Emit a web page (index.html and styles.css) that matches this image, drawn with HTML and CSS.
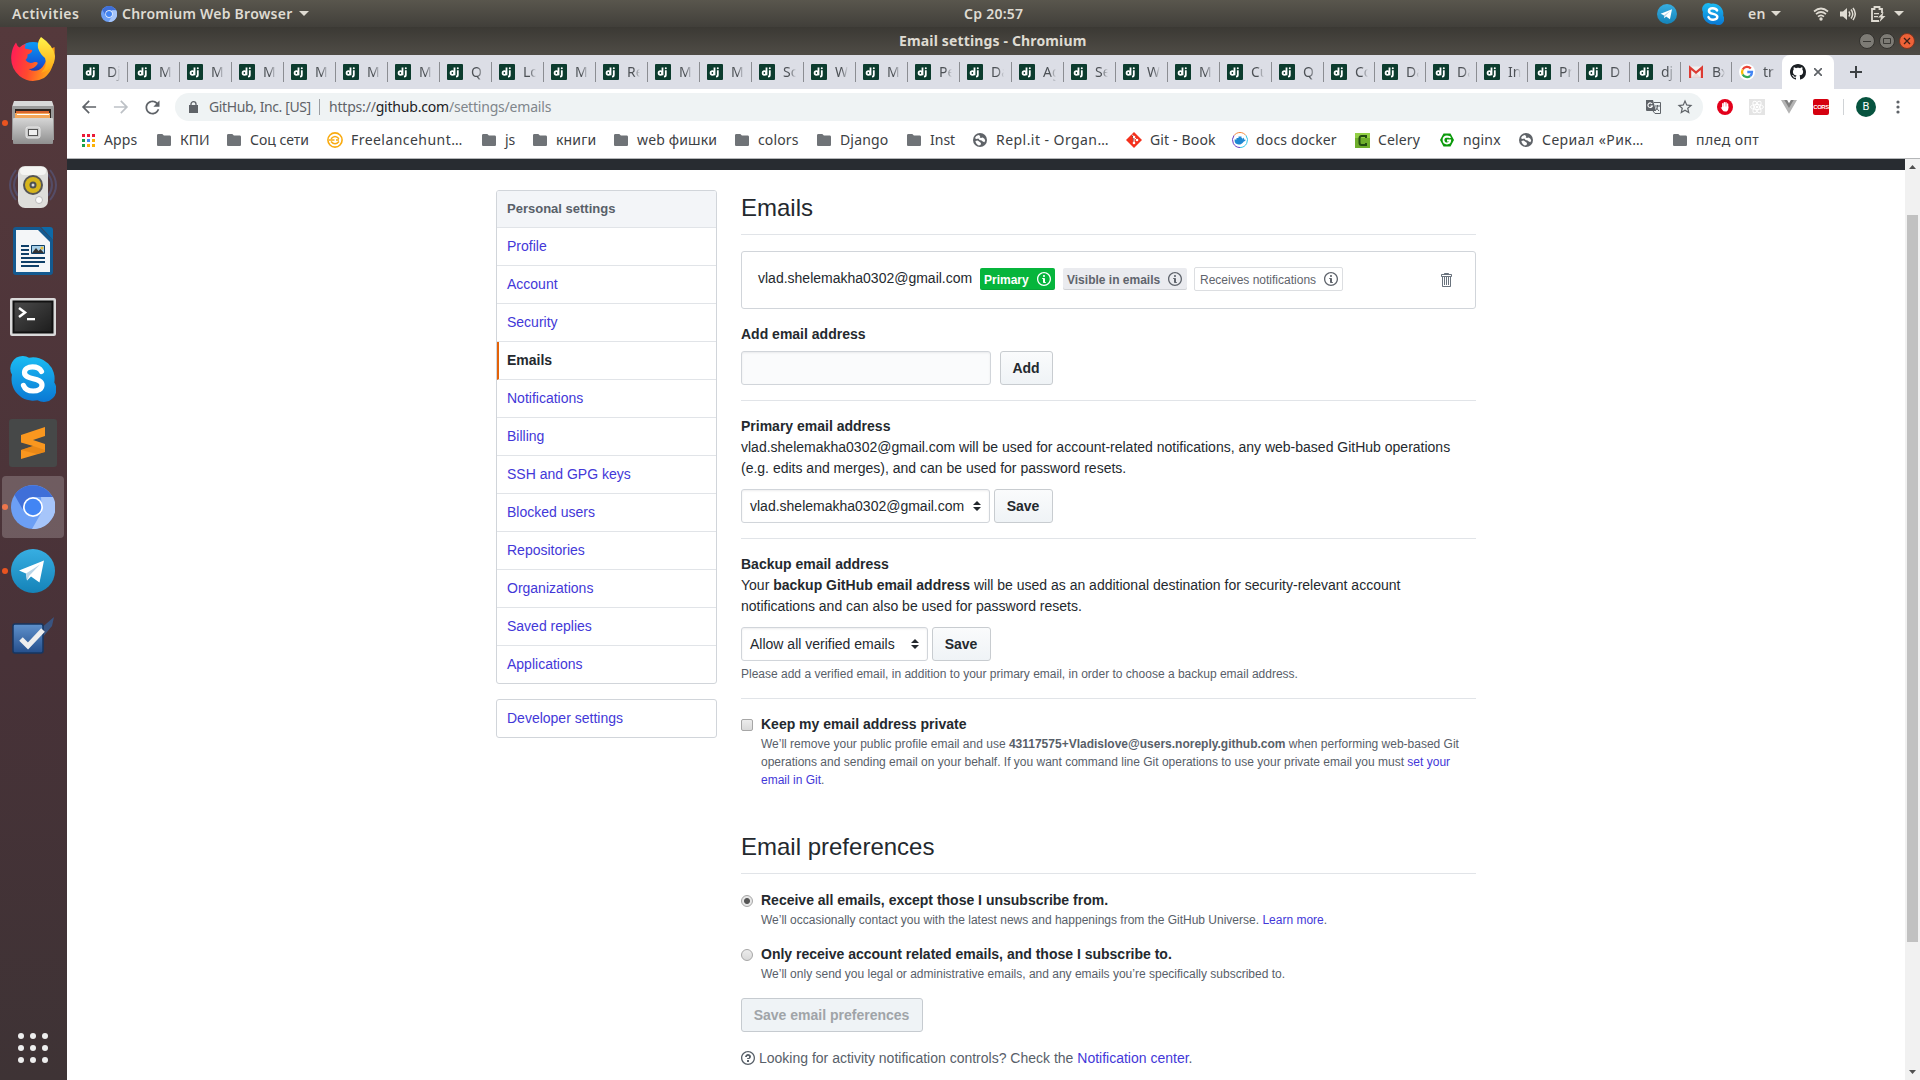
FILE: index.html
```html
<!DOCTYPE html>
<html lang="en">
<head>
<meta charset="utf-8">
<title>Email settings</title>
<link rel="stylesheet" href="styles.css">
</head>
<body>
<svg class="defs" width="0" height="0">
  <defs>
    <linearGradient id="ff-body" x1="0" y1="0.3" x2="1" y2="0.5"><stop offset="0" stop-color="#ff1d57"/><stop offset="0.45" stop-color="#ff4a2e"/><stop offset="1" stop-color="#ffb412"/></linearGradient>
    <linearGradient id="ff-tail" x1="0" y1="0" x2="0" y2="1"><stop offset="0" stop-color="#fff44a"/><stop offset="1" stop-color="#ffa414"/></linearGradient>
    <linearGradient id="ff-globe" x1="0" y1="0" x2="0" y2="1"><stop offset="0" stop-color="#0a9cf5"/><stop offset="0.6" stop-color="#1258d8"/><stop offset="1" stop-color="#2d1a7a"/></linearGradient>
    <linearGradient id="steel" x1="0" y1="0" x2="0" y2="1"><stop offset="0" stop-color="#d6d6d6"/><stop offset="1" stop-color="#8f8f8f"/></linearGradient>
    <linearGradient id="skype-g" x1="0" y1="0" x2="0" y2="1"><stop offset="0" stop-color="#1bbcf3"/><stop offset="1" stop-color="#0a78d4"/></linearGradient>
    <linearGradient id="tg-g" x1="0" y1="0" x2="0" y2="1"><stop offset="0" stop-color="#37aee2"/><stop offset="1" stop-color="#1583b8"/></linearGradient>
    <linearGradient id="todo-g" x1="0" y1="0" x2="0" y2="1"><stop offset="0" stop-color="#5f91cc"/><stop offset="1" stop-color="#254f8c"/></linearGradient>
    <linearGradient id="term-g" x1="0" y1="0" x2="1" y2="1"><stop offset="0" stop-color="#4b4b4b"/><stop offset="1" stop-color="#1c1c1c"/></linearGradient>
  </defs>
  <symbol id="dj" viewBox="0 0 16 16"><rect width="16" height="16" rx="1" fill="#0c3c2e"/><g fill="none" stroke="#fff" stroke-width="1.800"><path d="M7.500 3.500v7.800"/><circle cx="5.400" cy="9" r="1.800"/><path d="M10.800 6.200v4.900q0 1.600-1.800 1.600"/></g><circle cx="10.800" cy="4.300" r="1" fill="#fff"/></symbol>
  <symbol id="folder" viewBox="0 0 14 12"><path fill="#6f7377" d="M1.300 0h4l1.600 1.600h5.800c.7 0 1.300.6 1.300 1.300v7.800c0 .7-.6 1.300-1.300 1.300H1.300C.6 12 0 11.400 0 10.700V1.300C0 .6.6 0 1.300 0z"/></symbol>
  <symbol id="globe" viewBox="0 0 14 14"><circle cx="7" cy="7" r="7" fill="#5f6368"/><path fill="#fff" d="M2 5.200C2.600 3.500 4 2.300 5.500 2l1.800 1-.6 1.300 1.200.7 1.800-.5 1.700 1.200.8 1.700-.8 1.800-1.600-.6L8.600 7.500l-2-.6-1.300-1.500L3.600 6zM2.400 8l2.200-.4 1.800 1.100 1.600 1.200-.4 2.200-1.800.4C4 11.900 2.700 10 2.400 8z"/></symbol>
  <symbol id="chromium" viewBox="0 0 44 44"><circle cx="22" cy="22" r="22" fill="#6c9ff5"/><path fill="#3f6fd8" d="M3.500 10A22 22 0 0 1 40.500 10.600L42 12H22L11.500 24z"/><path fill="#a6c5fa" d="M42 12A22 22 0 0 1 21 44L31 26.500 30 12z"/><circle cx="22" cy="22" r="10" fill="#fff"/><circle cx="22" cy="22" r="8.300" fill="#4285f4"/></symbol>
  <symbol id="skype" viewBox="0 0 46 46"><path fill="url(#skype-g)" d="M13 0a12 12 0 0 1 6 1.700A21.500 21.500 0 0 1 44.300 26.500 12.500 12.500 0 0 1 27.500 44.200 21.500 21.500 0 0 1 2 18.700 12.500 12.500 0 0 1 13 0z"/><path fill="none" stroke="#fff" stroke-width="5.200" stroke-linecap="round" d="M31.500 15.500c-2-3.800-6-4.600-9-4.600-4.500 0-8 2-8 5.600 0 8.500 17.500 4 17.500 12.500 0 4-4 6-8.800 6-4.500 0-8.200-1.800-9.700-5.500"/></symbol>
  <symbol id="telegram" viewBox="0 0 44 44"><circle cx="22" cy="22" r="22" fill="url(#tg-g)"/><path fill="#fff" d="M8 21.500 33 11.500 28.500 33.500 20 27.500 16 31.500 15 24.500z"/><path fill="#b9d4e6" d="M15 24.500 29 15.500 18.500 26.500 16 31.500z"/></symbol>
  <symbol id="info" viewBox="0 0 14 16"><path d="M6.300 5.690a.942.942 0 0 1-.28-.7c0-.28.09-.52.28-.7.19-.18.42-.28.7-.28.28 0 .52.09.7.28.18.19.28.42.28.7 0 .28-.09.52-.28.7a1 1 0 0 1-.7.3c-.28 0-.52-.11-.7-.3zM8 7.990c-.02-.25-.11-.48-.31-.69-.2-.19-.42-.3-.69-.31H6c-.27.02-.48.13-.69.31-.2.2-.3.44-.31.69h1v3c.02.27.11.5.31.69.2.2.42.31.69.31h1c.27 0 .48-.11.69-.31.2-.19.3-.42.31-.69H8V7.980v.01zM7 2.300c-3.140 0-5.700 2.540-5.700 5.680 0 3.140 2.560 5.700 5.700 5.700s5.700-2.550 5.700-5.700c0-3.150-2.560-5.690-5.700-5.690v.01zM7 .98c3.860 0 7 3.140 7 7s-3.140 7-7 7-7-3.120-7-7 3.140-7 7-7z"/></symbol>
  <symbol id="updown" viewBox="0 0 8 10"><path fill="#24292e" d="M4 0l4 4H0zM4 10L0 6h8z"/></symbol>
</svg>

<header class="topbar">
  <span class="activities">Activities</span>
  <svg class="app-icon" width="16" height="16"><use href="#chromium"/></svg>
  <span class="app-name">Chromium Web Browser</span>
  <i class="caret"></i>
  <span class="clock">Ср 20:57</span>
  <div class="tray">
    <svg class="tray-tg" width="20" height="20"><use href="#telegram"/></svg>
    <svg class="tray-skype" width="22" height="22"><use href="#skype"/></svg>
    <span class="lang">en</span>
    <i class="caret"></i>
    <svg class="tray-wifi" width="16" height="14" viewBox="0 0 16 14"><g fill="none" stroke="#dfdbd2" stroke-width="1.700"><path d="M1 4.500Q8-1.500 15 4.500"/><path d="M3 7.200Q8 2.800 13 7.200"/><path d="M5 9.700Q8 7 11 9.700"/></g><circle cx="8" cy="12" r="1.700" fill="#dfdbd2"/></svg>
    <svg class="tray-vol" width="16" height="14" viewBox="0 0 16 14"><path fill="#dfdbd2" d="M0 4.500h3L7 1v12L3 9.500H0z"/><g fill="none" stroke="#dfdbd2" stroke-width="1.500"><path d="M8.800 4.500q2 2.500 0 5M11 2.500q3.500 4.500 0 9M13 1q4.500 6 0 12"/></g></svg>
    <svg class="tray-bat" width="15" height="16" viewBox="0 0 15 16"><path fill="none" stroke="#dfdbd2" stroke-width="1.800" d="M8 15H1V3h2.500V1h5v2H11v4"/><path fill="#dfdbd2" d="M3 7h5v1.300H3zM3 10h4v1.300H3zM12.500 6 7 11.500h3L8.500 16l6-6h-3z"/></svg>
    <i class="caret"></i>
  </div>
</header>

<div class="desktop">
<nav class="dock">
  <div class="launcher"><svg width="44" height="46" viewBox="0 0 44 46"><circle cx="22" cy="24" r="18" fill="url(#ff-globe)"/><path fill="url(#ff-body)" d="M5 6.500Q6 10 8.500 11.500 11 8.500 15 8q-1.500 2.500-1 4.500l7 1.500q1 2.500-4.500 4.500.5 4-2 5.500 3 4.500 9 2 4-.5 3 2-3 5-9 5 8 4.500 14-2 6-8 4-16l8-4Q45 33 33 42 20 49 8.500 40-1.500 31 .5 18 1.500 11 5 6.500z"/><path fill="url(#ff-tail)" d="M30 1Q26 6 27 12 29 18 34 22 37 30 30 37 44 33 44 20 42 9 30 1z"/></svg></div>
  <div class="launcher running"><svg width="44" height="46" viewBox="0 0 44 46"><path fill="#d9d9d9" d="M3 1h38l2 6v10H1V7z"/><path fill="#9b9b9b" d="M1 6h42v34H1z"/><path fill="#2c2521" d="M4 9h36v11H4z"/><path fill="#d9662e" d="M5 11h33v5H5z"/><path fill="#f3a75a" d="M4 13h35v5H4z"/><path fill="#fff" d="M6 14h32v1H6z"/><rect x="2" y="18" width="40" height="26" rx="1" fill="url(#steel)"/><rect x="15" y="27" width="14" height="11" rx="2" fill="#c9c9c9" stroke="#e9e9e9"/><rect x="17.500" y="29.500" width="9" height="6" fill="#efefef" stroke="#555"/></svg></div>
  <div class="launcher"><svg width="50" height="44" viewBox="0 0 50 44"><g fill="none" stroke="#56567a" stroke-width="2" opacity=".7"><path d="M8 5Q-4 20 8 35M42 5q12 15 0 30"/><path d="M10 9Q2 20 10 31M40 9q8 11 0 22"/></g><rect x="10" y="1" width="30" height="42" rx="7" fill="#dededb"/><rect x="12" y="2" width="26" height="8" rx="4" fill="#f5f5f3"/><circle cx="25" cy="20" r="10" fill="#555"/><circle cx="25" cy="20" r="8" fill="#d6b51c"/><circle cx="25" cy="20" r="3.500" fill="#4c5152"/><circle cx="25" cy="20" r="1.500" fill="#ddd"/><circle cx="31" cy="35" r="3.500" fill="#fafafa" stroke="#bbb"/></svg></div>
  <div class="launcher"><svg width="40" height="48" viewBox="0 0 40 48"><path fill="#145a90" d="M3 0h24l13 13v32q0 3-3 3H3q-3 0-3-3V3q0-3 3-3z"/><path fill="#f4f6f8" d="M3 3h22l12 12v30H3z"/><path fill="#0d6aa8" d="M28 0h9q3 0 3 3v10z"/><path stroke="#0e3f68" stroke-width="2" d="M8 19h8M8 23h8M8 27h8M8 31h24M8 35h24M8 39h18"/><path fill="#a8d0e8" stroke="#0e3f68" d="M18.500 18.500h13v8h-13z"/><path fill="#333" d="m19 26 4-5 2.500 3 2-2 3.500 4z"/><circle cx="29" cy="21" r="1.500" fill="#e9bd32"/></svg></div>
  <div class="launcher terminal"><svg width="46" height="40" viewBox="0 0 46 40"><rect y="1" width="46" height="38" rx="2" fill="#dadada"/><rect x="3.500" y="4.500" width="39" height="31" fill="url(#term-g)" stroke="#111" stroke-width="2"/><path fill="none" stroke="#fff" stroke-width="2.500" d="m9 11 6 4.500L9 20"/><path fill="#fff" d="M17 21h8v2.300h-8z"/></svg></div>
  <div class="launcher"><svg width="46" height="46"><use href="#skype"/></svg></div>
  <div class="launcher"><svg width="48" height="48" viewBox="0 0 48 48"><rect width="48" height="48" rx="3" fill="#464848"/><path fill="#f9971f" d="m12 16 24-8v9l-12 4 12 4v8l-24 7v-9l12-4-12-3.500z"/><path fill="#d9790f" d="m12 31 12-4 12 4v2l-8 2z" opacity=".5"/></svg></div>
  <div class="launcher running focused"><svg width="44" height="44"><use href="#chromium"/></svg></div>
  <div class="launcher running"><svg width="44" height="44"><use href="#telegram"/></svg></div>
  <div class="launcher"><svg width="44" height="42" viewBox="0 0 44 42"><path fill="#365c93" d="m28 16 15-13-2 9-10 12z" opacity=".8"/><rect x="2" y="10" width="30" height="29" rx="2" fill="url(#todo-g)" stroke="#163661" stroke-width="1.500"/><path fill="none" stroke="#eee" stroke-width="5" d="m10 25 7 7 15-16"/></svg></div>
  <div class="show-apps"><i></i><i></i><i></i><i></i><i></i><i></i><i></i><i></i><i></i></div>
</nav>

<section class="window">
  <div class="titlebar">
    <span class="win-title">Email settings - Chromium</span>
    <div class="win-buttons">
      <svg width="16" height="16" viewBox="0 0 16 16"><circle cx="8" cy="8" r="7.500" fill="#7d7b75" stroke="#33322e"/><path stroke="#3a3935" d="M4 8.500h8"/></svg>
      <svg width="16" height="16" viewBox="0 0 16 16"><circle cx="8" cy="8" r="7.500" fill="#7d7b75" stroke="#33322e"/><path fill="none" stroke="#3a3935" d="M4.500 5.500h7v5h-7z"/></svg>
      <svg width="16" height="16" viewBox="0 0 16 16"><circle cx="8" cy="8" r="7.500" fill="#ee6238" stroke="#7e3520"/><path fill="none" stroke="#3c2018" stroke-width="1.300" d="m5 5 6 6m0-6-6 6"/></svg>
    </div>
  </div>

  <div class="tabs">
    <div class="tab"><svg><use href="#dj"/></svg><span>Dj</span></div>
    <div class="tab"><svg><use href="#dj"/></svg><span>M</span></div>
    <div class="tab"><svg><use href="#dj"/></svg><span>M</span></div>
    <div class="tab"><svg><use href="#dj"/></svg><span>M</span></div>
    <div class="tab"><svg><use href="#dj"/></svg><span>M</span></div>
    <div class="tab"><svg><use href="#dj"/></svg><span>M</span></div>
    <div class="tab"><svg><use href="#dj"/></svg><span>M</span></div>
    <div class="tab"><svg><use href="#dj"/></svg><span>Q</span></div>
    <div class="tab"><svg><use href="#dj"/></svg><span>Lo</span></div>
    <div class="tab"><svg><use href="#dj"/></svg><span>M</span></div>
    <div class="tab"><svg><use href="#dj"/></svg><span>Re</span></div>
    <div class="tab"><svg><use href="#dj"/></svg><span>M</span></div>
    <div class="tab"><svg><use href="#dj"/></svg><span>M</span></div>
    <div class="tab"><svg><use href="#dj"/></svg><span>Sc</span></div>
    <div class="tab"><svg><use href="#dj"/></svg><span>W</span></div>
    <div class="tab"><svg><use href="#dj"/></svg><span>M</span></div>
    <div class="tab"><svg><use href="#dj"/></svg><span>Pe</span></div>
    <div class="tab"><svg><use href="#dj"/></svg><span>Da</span></div>
    <div class="tab"><svg><use href="#dj"/></svg><span>Ag</span></div>
    <div class="tab"><svg><use href="#dj"/></svg><span>Se</span></div>
    <div class="tab"><svg><use href="#dj"/></svg><span>W</span></div>
    <div class="tab"><svg><use href="#dj"/></svg><span>M</span></div>
    <div class="tab"><svg><use href="#dj"/></svg><span>Cu</span></div>
    <div class="tab"><svg><use href="#dj"/></svg><span>Q</span></div>
    <div class="tab slim"><svg><use href="#dj"/></svg><span>Co</span></div>
    <div class="tab slim"><svg><use href="#dj"/></svg><span>Da</span></div>
    <div class="tab slim"><svg><use href="#dj"/></svg><span>Da</span></div>
    <div class="tab slim"><svg><use href="#dj"/></svg><span>In</span></div>
    <div class="tab slim"><svg><use href="#dj"/></svg><span>Pr</span></div>
    <div class="tab slim"><svg><use href="#dj"/></svg><span>D</span></div>
    <div class="tab slim"><svg><use href="#dj"/></svg><span>dj</span></div>
    <div class="tab slim"><svg viewBox="0 0 16 16"><path fill="#f1f1f1" d="M1 2.500h14v11H1z"/><path fill="#d9a9a5" d="M3 14 8 8.500l5 5.500z" opacity=".3"/><path fill="none" stroke="#dd3b33" stroke-width="2.200" d="M2.100 14V3.600L8 8.600l5.900-5V14"/></svg><span>Вх</span></div>
    <div class="tab slim last"><svg viewBox="0 0 16 16"><circle cx="8" cy="8" r="8" fill="#fff"/><g fill="none" stroke-width="2.300"><path stroke="#ea4335" d="M11.800 4.600A5 5 0 0 0 3.700 5.500"/><path stroke="#fbbc05" d="M3.700 5.500a5 5 0 0 0 0 5"/><path stroke="#34a853" d="M3.700 10.500a5 5 0 0 0 7.500 1.500"/><path stroke="#4285f4" d="M11.200 12A5 5 0 0 0 13 8H8.300"/></g></svg><span>tr</span></div>
    <div class="tab-active">
      <svg width="16" height="16" viewBox="0 0 16 16"><path fill="#1b1f23" d="M8 0C3.580 0 0 3.580 0 8c0 3.540 2.290 6.530 5.470 7.590.4.07.55-.17.55-.38 0-.19-.01-.82-.01-1.490-2.010.37-2.530-.49-2.690-.94-.09-.23-.48-.94-.82-1.130-.28-.15-.68-.52-.01-.53.63-.01 1.080.58 1.230.82.72 1.210 1.870.87 2.330.66.07-.52.28-.87.51-1.070-1.780-.2-3.640-.89-3.640-3.950 0-.87.31-1.590.82-2.150-.08-.2-.36-1.020.08-2.120 0 0 .67-.21 2.200.82.64-.18 1.320-.27 2-.27.68 0 1.360.09 2 .27 1.530-1.040 2.200-.82 2.200-.82.44 1.100.16 1.920.08 2.120.51.56.82 1.270.82 2.150 0 3.070-1.870 3.750-3.650 3.950.29.25.54.73.54 1.480 0 1.070-.01 1.930-.01 2.200 0 .21.15.46.55.38A8.013 8.013 0 0 0 16 8c0-4.420-3.580-8-8-8z"/></svg>
      <svg width="8" height="8" viewBox="0 0 8 8"><path stroke="#5f6368" stroke-width="1.700" d="m0 0 8 8M8 0 0 8"/></svg>
    </div>
    <svg class="new-tab" width="12" height="12" viewBox="0 0 12 12"><path stroke="#3c4043" stroke-width="2" d="M6 0v12M0 6h12"/></svg>
  </div>

  <div class="toolbar">
    <svg class="back" width="20" height="20" viewBox="0 0 24 24"><path fill="#5f6368" d="M20.500 11H7.330l5.590-5.590L11.500 4l-8 8 8 8 1.410-1.410L7.330 13H20.500z"/></svg>
    <svg class="forward" width="20" height="20" viewBox="0 0 24 24"><path fill="#bdc1c6" d="M3.500 11h13.170l-5.590-5.590L12.500 4l8 8-8 8-1.410-1.410L16.670 13H3.500z"/></svg>
    <svg class="reload" width="21" height="21" viewBox="0 0 24 24"><path fill="#5f6368" d="M17.650 6.350C16.200 4.900 14.210 4 12 4c-4.420 0-7.990 3.580-7.990 8s3.570 8 7.990 8c3.730 0 6.840-2.550 7.730-6h-2.080c-.82 2.330-3.040 4-5.650 4-3.310 0-6-2.690-6-6s2.690-6 6-6c1.660 0 3.140.69 4.220 1.780L13 11h7V4l-2.350 2.350z"/></svg>
    <div class="omnibox">
      <svg class="lock" width="9" height="12" viewBox="0 0 9 12"><path fill="#5f6368" d="M0 4h9v8H0z"/><path fill="none" stroke="#5f6368" stroke-width="1.300" d="M2 4.500V3a2.500 2.300 0 0 1 5 0v1.500"/></svg>
      <span class="org">GitHub, Inc. [US]</span>
      <span class="url"><span>https://</span><b>github.com</b><span class="path">/settings/emails</span></span>
      <svg class="translate" width="15" height="14" viewBox="0 0 15 14"><path fill="#5f6368" d="M0 0h7l3 11H1q-1 0-1-1z"/><path fill="none" stroke="#5f6368" d="M8 2.500h6.500v11H9L7 11"/><path fill="none" stroke="#fff" stroke-width="1.100" d="M6.200 4A2.300 2.300 0 1 0 6.400 6H4.500"/><path fill="none" stroke="#5f6368" d="M9 6h5M11.500 5v1q0 3-2 4.500M10 7.500l3 3.500"/></svg>
      <svg class="star" width="18" height="18" viewBox="0 0 24 24"><path fill="#5f6368" d="M22 9.240l-7.190-.62L12 2 9.190 8.630 2 9.240l5.460 4.730L5.820 21 12 17.270 18.180 21l-1.630-7.030L22 9.240zM12 15.400l-3.760 2.270 1-4.280-3.320-2.880 4.380-.38L12 6.100l1.710 4.040 4.380.38-3.320 2.880 1 4.280L12 15.400z"/></svg>
    </div>
    <div class="extensions">
      <svg width="16" height="16" viewBox="0 0 16 16"><circle cx="8" cy="8" r="8" fill="#e3001b"/><path fill="none" stroke="#fff" stroke-width="1.400" stroke-linecap="round" d="M5.800 9V4.800M7.400 8V3.600M9 8V3.800M10.600 8.500V5"/><path fill="#fff" d="M5 7.500h6.400v1.700q-.3 3.400-3 3.400-2.200 0-3-1.700L3.600 8.300q1-.5 1.400.5z"/></svg>
      <svg width="16" height="16" viewBox="0 0 16 16"><path fill="#e4e4e4" d="M0 0h16v16H0z"/><g fill="none" stroke="#fff"><ellipse cx="8" cy="8" rx="6.500" ry="2.500"/><ellipse cx="8" cy="8" rx="6.500" ry="2.500" transform="rotate(60 8 8)"/><ellipse cx="8" cy="8" rx="6.500" ry="2.500" transform="rotate(120 8 8)"/></g><circle cx="8" cy="8" r="1.300" fill="#fff"/></svg>
      <svg width="16" height="16" viewBox="0 0 16 16"><path fill="#b4b4b4" d="M0 1h6l2 3.500L10 1h6L8 14.800z"/><path fill="#808080" d="M3.300 1H6l2 3.500L10 1h2.700L8 9z"/></svg>
      <span class="cors">CORS</span>
    </div>
    <span class="avatar">В</span>
    <svg class="menu" width="4" height="14" viewBox="0 0 4 14"><g fill="#5f6368"><circle cx="2" cy="2" r="1.600"/><circle cx="2" cy="7" r="1.600"/><circle cx="2" cy="12" r="1.600"/></g></svg>
  </div>

  <div class="bookmarks">
    <div><svg width="13" height="13" viewBox="0 0 13 13"><path fill="#ea1c38" d="M0 0h3v3H0zM5 0h3v3H5zM10 0h3v3h-3z"/><path fill="#17a04a" d="M0 5h3v3H0zM0 10h3v3H0z"/><path fill="#4285f4" d="M5 5h3v3H5z"/><path fill="#fbb105" d="M10 5h3v3h-3zM5 10h3v3H5zM10 10h3v3h-3z"/></svg><span class="loose">Apps</span></div>
    <div><svg width="14" height="12"><use href="#folder"/></svg><span>КПИ</span></div>
    <div><svg width="14" height="12"><use href="#folder"/></svg><span>Соц сети</span></div>
    <div class="site"><svg width="16" height="16" viewBox="0 0 16 16"><g fill="none" stroke="#f9ab10"><circle cx="8" cy="8" r="7.100" stroke-width="1.600"/><path stroke-width="1.500" d="M4 6.800q4-4.500 8 0M2 8h5.500M9 8h3M4 9.500q4 4.500 8 0"/></g></svg><span class="looser">Freelancehunt…</span></div>
    <div><svg width="14" height="12"><use href="#folder"/></svg><span>js</span></div>
    <div><svg width="14" height="12"><use href="#folder"/></svg><span class="loose">книги</span></div>
    <div><svg width="14" height="12"><use href="#folder"/></svg><span class="loose">web фишки</span></div>
    <div><svg width="14" height="12"><use href="#folder"/></svg><span class="loose">colors</span></div>
    <div><svg width="14" height="12"><use href="#folder"/></svg><span class="loose">Django</span></div>
    <div><svg width="14" height="12"><use href="#folder"/></svg><span>Inst</span></div>
    <div><svg width="14" height="14"><use href="#globe"/></svg><span class="looser">Repl.it - Organ…</span></div>
    <div class="site"><svg width="16" height="16" viewBox="0 0 16 16"><path fill="#f4301c" d="m8 0 8 8-8 8-8-8z"/><path stroke="#fff" d="M6 2.500 8 5v6M8 5l3 3"/><g fill="#fff"><circle cx="8" cy="5" r="1.300"/><circle cx="8" cy="11" r="1.300"/><circle cx="11" cy="8" r="1.300"/></g></svg><span class="loose">Git - Book</span></div>
    <div class="site"><svg width="16" height="16" viewBox="0 0 16 16"><g fill="none" stroke-width="1"><path stroke="#f58a3c" d="M2 3.500a7.500 7.500 0 0 1 12 0"/><path stroke="#30c6e8" d="M14 3.500a7.500 7.500 0 0 1-6 12"/><path stroke="#6a3cc0" d="M8 15.500A7.500 7.500 0 0 1 2 3.500"/></g><path fill="#1e88d2" d="M2.500 7.500h2V6h2V4.500h3V6h1v1.500q1-.5.500-2 1.500 1 1.300 2.200l1.500.1q-.5 1.500-2 1.600Q10 12.500 6.500 12.500 2.500 12.300 2.500 7.500z"/></svg><span class="loose">docs docker</span></div>
    <div class="site"><svg width="15" height="15" viewBox="0 0 15 15"><path fill="#6fae2c" d="M0 0h15v15H0z"/><path fill="#92cf45" d="M0 0h15v5H0z"/><path fill="none" stroke="#234d12" stroke-width="2" d="M11 5V3H6.500Q4.500 3 4.500 5.500v4Q4.500 12 6.500 12H11v-2"/></svg><span class="loose">Celery</span></div>
    <div><svg width="14" height="14" viewBox="0 0 14 14"><path fill="#0a9a0a" d="M3.500.5h7L14 7l-3.500 6.500h-7L0 7z"/><path fill="none" stroke="#fff" stroke-width="1.800" d="M10.500 4.800Q9.500 3.500 7 3.500 3.500 3.700 3.500 7t3.500 3.500q3 0 3.200-3H7"/></svg><span class="loose">nginx</span></div>
    <div><svg width="14" height="14"><use href="#globe"/></svg><span class="looser">Сериал «Рик…</span></div>
    <div><svg width="14" height="12"><use href="#folder"/></svg><span class="looser">плед опт</span></div>
  </div>

  <div class="viewport">
    <div class="page">
      <div class="gh-header"></div>
      <div class="container">
        <aside>
          <nav class="side-menu">
            <h3>Personal settings</h3>
            <a>Profile</a>
            <a>Account</a>
            <a>Security</a>
            <a class="selected">Emails</a>
            <a>Notifications</a>
            <a>Billing</a>
            <a>SSH and GPG keys</a>
            <a>Blocked users</a>
            <a>Repositories</a>
            <a>Organizations</a>
            <a>Saved replies</a>
            <a>Applications</a>
          </nav>
          <nav class="side-menu"><a>Developer settings</a></nav>
        </aside>
        <main>
          <h2>Emails</h2>
          <div class="email-box">
            <span class="email">vlad.shelemakha0302@gmail.com</span>
            <span class="badge primary">Primary<svg width="14" height="16"><use href="#info"/></svg></span>
            <span class="badge visible">Visible in emails<svg width="14" height="16"><use href="#info"/></svg></span>
            <span class="badge receives">Receives notifications<svg width="14" height="16"><use href="#info"/></svg></span>
            <svg class="trash" width="12" height="16" viewBox="0 0 12 16"><path d="M11 2H9c0-.55-.45-1-1-1H5c-.55 0-1 .45-1 1H2c-.55 0-1 .45-1 1v1c0 .55.45 1 1 1v9c0 .55.45 1 1 1h7c.55 0 1-.45 1-1V5c.55 0 1-.45 1-1V3c0-.55-.45-1-1-1zm-1 12H3V5h1v8h1V5h1v8h1V5h1v8h1V5h1v9zm1-10H2V3h9v1z"/></svg>
          </div>
          <form class="group add-group">
            <label>Add email address</label>
            <div class="row"><input class="text-input" type="text"><button type="button" class="btn add">Add</button></div>
          </form>
          <div class="group">
            <label>Primary email address</label>
            <p>vlad.shelemakha0302@gmail.com will be used for account-related notifications, any web-based GitHub operations<br>(e.g. edits and merges), and can be used for password resets.</p>
            <div class="row gap-4"><div class="select wide">vlad.shelemakha0302@gmail.com<svg width="8" height="10"><use href="#updown"/></svg></div><button type="button" class="btn">Save</button></div>
          </div>
          <div class="group">
            <label>Backup email address</label>
            <p>Your <b>backup GitHub email address</b> will be used as an additional destination for security-relevant account<br>notifications and can also be used for password resets.</p>
            <div class="row gap-4"><div class="select">Allow all verified emails<svg width="8" height="10"><use href="#updown"/></svg></div><button type="button" class="btn">Save</button></div>
            <p class="hint">Please add a verified email, in addition to your primary email, in order to choose a backup email address.</p>
          </div>
          <div class="group check">
            <input type="checkbox">
            <div>
              <label>Keep my email address private</label>
              <p class="note">We’ll remove your public profile email and use <b>43117575+Vladislove@users.noreply.github.com</b> when performing web-based Git<br>operations and sending email on your behalf. If you want command line Git operations to use your private email you must <a>set your</a><br><a>email in Git</a>.</p>
            </div>
          </div>
          <h2 class="prefs">Email preferences</h2>
          <div class="check option">
            <input type="radio" name="pref" checked>
            <div>
              <label>Receive all emails, except those I unsubscribe from.</label>
              <p class="note">We’ll occasionally contact you with the latest news and happenings from the GitHub Universe. <a>Learn more</a>.</p>
            </div>
          </div>
          <div class="check option">
            <input type="radio" name="pref">
            <div>
              <label>Only receive account related emails, and those I subscribe to.</label>
              <p class="note">We’ll only send you legal or administrative emails, and any emails you’re specifically subscribed to.</p>
            </div>
          </div>
          <button type="button" class="btn save-prefs" disabled>Save email preferences</button>
          <p class="looking"><svg width="14" height="16" viewBox="0 0 14 16"><path d="M6 10h2v2H6v-2zm4-3.500C10 8.640 8 9 8 9H6c0-.55.45-1 1-1h.5c.28 0 .5-.22.5-.5v-1c0-.28-.22-.5-.5-.5h-1c-.28 0-.5.22-.5.5V7H4c0-1.500 1.500-3 3-3s3 1 3 2.500zM7 2.300c3.140 0 5.700 2.560 5.700 5.700s-2.560 5.700-5.700 5.700A5.710 5.710 0 0 1 1.300 8c0-3.140 2.560-5.700 5.700-5.700zM7 1C3.140 1 0 4.140 0 8s3.140 7 7 7 7-3.140 7-7-3.140-7-7-7z"/></svg><span>Looking for activity notification controls? Check the <a>Notification center</a>.</span></p>
        </main>
      </div>
    </div>
    <div class="scrollbar">
      <svg width="7" height="4" viewBox="0 0 7 4"><path fill="#505050" d="M3.500 0 7 4H0z"/></svg>
      <div class="thumb"></div>
      <svg class="down" width="7" height="4" viewBox="0 0 7 4"><path fill="#505050" d="M3.500 4 7 0H0z"/></svg>
    </div>
  </div>
</section>
</div>
</body>
</html>
```
FILE: styles.css
```css
* { box-sizing: border-box; }
body {
  margin: 0;
  width: 1920px;
  height: 1080px;
  overflow: hidden;
  background: #fff;
  font: 14px/21px "Liberation Sans", Arial, sans-serif;
  color: #24292e;
}
svg { display: block; flex: none; }
.defs { position: absolute; }
h2, h3, p { margin: 0; }

/* GNOME top bar */
.topbar {
  display: flex;
  align-items: center;
  height: 27px;
  padding-left: 12px;
  background: linear-gradient(#59564d, #413f3a);
  color: #dfdbd2;
  font: 600 14px/26px "Noto Sans", sans-serif;
  letter-spacing: .25px;
  white-space: nowrap;
}
.activities { width: 89px; letter-spacing: .5px; }
.app-icon { margin-right: 5px; }
.app-name { width: 177px; }
.caret {
  flex: none;
  width: 10px;
  height: 5px;
  background: #dfdbd2;
  clip-path: polygon(0 0, 100% 0, 50% 100%);
}
.clock { width: 70px; margin-left: 655px; }
.tray { display: flex; align-items: center; margin-left: 623px; }
.tray-skype { margin-left: 25px; }
.lang { width: 23px; margin-left: 24px; }
.tray-wifi { margin-left: 32px; }
.tray-vol { margin-left: 11px; }
.tray-bat { margin: 0 8px 0 15px; }

.desktop { display: flex; height: 1053px; }

/* Dock */
.dock {
  display: flex;
  flex-direction: column;
  width: 67px;
  background: linear-gradient(#55393c, #483238 60%, #3e3335);
}
.launcher {
  position: relative;
  display: flex;
  align-items: center;
  justify-content: center;
  height: 64px;
  padding-right: 1px;
}
.launcher.terminal { padding-top: 3px; }
.running::before {
  content: "";
  position: absolute;
  left: 2px;
  top: 29px;
  width: 6px;
  height: 6px;
  border-radius: 50%;
  background: #e95420;
}
.focused::after {
  content: "";
  position: absolute;
  inset: 1px 3px 1px 2px;
  border-radius: 4px;
  background: rgba(255, 255, 255, .2);
}
.focused svg { position: relative; z-index: 1; }
.show-apps {
  display: grid;
  grid-template-columns: repeat(3, 6px);
  gap: 6px;
  margin: auto 0 17px 18px;
}
.show-apps i { height: 6px; border-radius: 50%; background: #eee; }

/* Browser window */
.window { display: flex; flex-direction: column; width: 1853px; }
.titlebar {
  display: flex;
  align-items: center;
  height: 28px;
  background: linear-gradient(#3b3934, #4f4c46);
  color: #dfdbd2;
  font: 700 14px/28px "Noto Sans", sans-serif;
  letter-spacing: .15px;
  white-space: nowrap;
}
.win-title { width: 700px; margin-left: 832px; }
.win-buttons { display: flex; gap: 4px; margin-left: 260px; }

.tabs {
  display: flex;
  height: 34px;
  padding-left: 8px;
  background: #dcdee6;
  color: #4d5156;
  font: 14px/34px "Noto Sans", sans-serif;
}
.tab {
  position: relative;
  display: flex;
  flex: none;
  align-items: center;
  gap: 8px;
  width: 52px;
  padding-left: 8px;
}
.tab::after {
  content: "";
  position: absolute;
  right: -1px;
  top: 7px;
  width: 1px;
  height: 20px;
  background: #8b8d92;
}
.tab svg { width: 16px; height: 16px; }
.tab span {
  width: 13px;
  overflow: hidden;
  -webkit-mask: linear-gradient(90deg, #000 50%, transparent);
  mask: linear-gradient(90deg, #000 50%, transparent);
}
.tab.slim { width: 51px; }
.tab.last::after { display: none; }
.tab-active {
  display: flex;
  align-items: center;
  flex: none;
  gap: 8px;
  width: 52px;
  padding-left: 8px;
  border-radius: 8px 8px 0 0;
  background: #fff;
}
.new-tab { margin: 11px 0 0 16px; }

.toolbar {
  display: flex;
  align-items: center;
  height: 36px;
  padding-left: 12px;
  background: #fff;
}
.forward { margin-left: 12px; }
.reload { margin-left: 11px; }
.omnibox {
  display: flex;
  align-items: center;
  width: 1528px;
  height: 28px;
  margin-left: 12px;
  padding-left: 14px;
  border-radius: 14px;
  background: #eff3f4;
  color: #5f6368;
  font: 14px/28px "Noto Sans", sans-serif;
  white-space: nowrap;
}
.org {
  width: 111px;
  margin-left: 11px;
  height: 16px;
  line-height: 16px;
  border-right: 1px solid #9a9da1;
  letter-spacing: -.4px;
}
.url { width: 1326px; padding-left: 9px; letter-spacing: -.2px; }
.url b { font-weight: 400; color: #202124; }
.url .path { color: #80868b; }
.star { margin-left: 15px; }
.extensions { display: flex; gap: 16px; margin-left: 14px; padding-right: 14px; border-right: 1px solid #d0d3d6; }
.cors {
  width: 16px;
  height: 16px;
  border-radius: 2px;
  background: #d5000f;
  color: #fff;
  font: 700 6px/16px "Liberation Sans", sans-serif;
  letter-spacing: -.5px;
  text-align: center;
}
.avatar {
  width: 20px;
  height: 20px;
  margin-left: 12px;
  border-radius: 50%;
  background: #07533f;
  color: #fff;
  font: 11px/20px Roboto, sans-serif;
  text-align: center;
}
.menu { margin-left: 20px; }

.bookmarks {
  display: grid;
  grid-template-columns: 75px 70px 100px 155px 51px 81px 121px 82px 90px 66px 153px 106px 123px 85px 79px 154px 1fr;
  height: 34px;
  padding-left: 15px;
  border-bottom: 1px solid #b4b6b8;
  background: #fff;
  color: #3c4043;
  font: 14px/30px "Noto Sans", sans-serif;
  white-space: nowrap;
}
.bookmarks div { display: flex; align-items: center; height: 30px; gap: 9px; }
.bookmarks .site { gap: 8px; }
.loose { letter-spacing: .15px; }
.looser { letter-spacing: .45px; }

/* Page area */
.viewport { display: flex; flex: 1; min-height: 0; }
.page { width: 1838px; overflow: hidden; }
.gh-header { height: 11px; background: #282c31; }
.container { display: flex; gap: 24px; width: 980px; margin: 20px auto 0; }
aside { width: 221px; }
a { color: #4338d8; }

.side-menu { margin-bottom: 15px; border: 1px solid #d1d5da; border-radius: 3px; overflow: hidden; }
.side-menu h3 {
  height: 37px;
  padding: 8px 10px;
  border-bottom: 1px solid #e1e4e8;
  background: #f3f5f8;
  color: #586069;
  font-size: 13px;
  line-height: 20px;
}
.side-menu a { display: block; padding: 8px 10px; border-bottom: 1px solid #e1e4e8; }
.side-menu a:last-child { border-bottom: 0; }
.side-menu .selected {
  padding-left: 8px;
  border-left: 2px solid #e36209;
  color: #24292e;
  font-weight: 700;
}

main { width: 735px; }
h2 {
  height: 45px;
  border-bottom: 1px solid #e1e4e8;
  font-size: 24px;
  font-weight: 400;
  line-height: 36px;
}
.email-box {
  display: flex;
  align-items: center;
  height: 58px;
  margin-top: 16px;
  padding: 0 16px;
  border: 1px solid #d1d5da;
  border-radius: 3px;
  white-space: nowrap;
}
.email { width: 222px; padding-bottom: 3px; }
.badge {
  display: flex;
  align-items: center;
  justify-content: space-between;
  height: 22px;
  margin-bottom: 2px;
  padding: 1px 4px 0;
  border-radius: 2px;
  font-size: 12px;
  font-weight: 700;
  line-height: 22px;
}
.badge svg, .trash, .looking svg { fill: currentColor; }
.badge svg { margin-top: -1px; }
.primary { width: 75px; background: #06b53c; color: #fff; box-shadow: inset 0 -1px rgba(27, 31, 35, .12); }
.visible { width: 124px; margin-left: 8px; padding-right: 5px; background: #eaebef; color: #5f646c; box-shadow: inset 0 -1px rgba(27, 31, 35, .12); }
.receives { width: 149px; height: 24px; margin-left: 7px; padding-left: 5px; border: 1px solid #dcdee1; color: #5f646c; font-weight: 400; }
.trash { margin: 0 0 1px 97px; color: #6a737d; }

.group { padding: 15px 0; border-bottom: 1px solid #e1e4e8; }
.group.check { padding-bottom: 0; border: 0; }
label { display: block; font-weight: 700; }
.row { display: flex; gap: 9px; margin-top: 10px; }
.row.gap-4 { gap: 4px; }
.add-group .row { margin-top: 6px; }
.text-input {
  width: 250px;
  height: 34px;
  border: 1px solid #d1d5da;
  border-radius: 3px;
  background: #fafbfc;
  box-shadow: inset 0 1px 2px rgba(27, 31, 35, .075);
}
.select {
  display: flex;
  align-items: center;
  justify-content: space-between;
  width: 187px;
  height: 34px;
  padding: 0 8px;
  border: 1px solid #d1d5da;
  border-radius: 3px;
  box-shadow: inset 0 1px 2px rgba(27, 31, 35, .075);
}
.select.wide { width: 249px; }
.btn {
  width: 59px;
  height: 34px;
  padding: 0 1px 0 0;
  border: 1px solid #c8ccd0;
  border-radius: 3px;
  background: linear-gradient(#fafbfc, #eff3f6);
  color: #24292e;
  font: 700 14px/20px "Liberation Sans", Arial, sans-serif;
}
.btn.add { width: 53px; }
.hint, .note { color: #586069; font-size: 12px; line-height: 18px; }
.hint { margin-top: 4px; }
.note { white-space: nowrap; }
.check { display: flex; gap: 8px; }
.check input {
  appearance: none;
  flex: none;
  width: 12px;
  height: 12px;
  margin: 5px 0 0;
  border: 1px solid #a6a6a6;
  border-radius: 2px;
  background: linear-gradient(#ececec, #d9d9d9);
}
.check input[type="radio"] { border-radius: 50%; }
.check input:checked { background: radial-gradient(circle, #555 0 2.500px, #e6e6e6 3.500px); }
.prefs { margin-top: 40px; margin-bottom: 16px; }
.option { margin-bottom: 15px; }
.save-prefs { display: block; width: 182px; border-color: #c6cbd0; background: #eff3f6; color: #a0a4a8; }
.looking { display: flex; align-items: center; gap: 4px; margin-top: 16px; color: #586069; }
.looking svg { margin-top: -1px; }

.scrollbar {
  display: flex;
  flex-direction: column;
  align-items: center;
  width: 15px;
  padding: 6px 0;
  background: #f1f1f1;
}
.thumb { width: 11px; height: 727px; margin-top: 46px; background: #c1c1c1; }
.scrollbar .down { margin-top: auto; }
```
